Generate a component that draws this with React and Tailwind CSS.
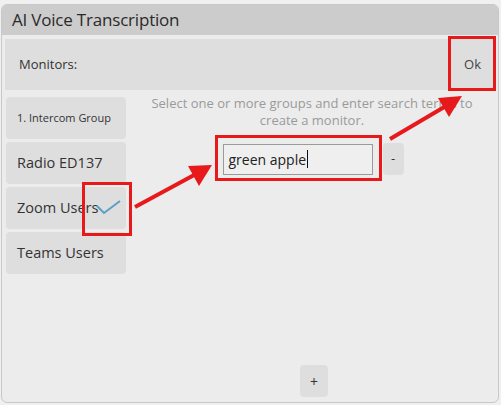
import React from 'react';

const font = { fontFamily: '"Open Sans", "Noto Sans", sans-serif' };

const groups = [
  { name: '1. Intercom Group', small: true },
  { name: 'Radio ED137' },
  { name: 'Zoom Users', checked: true },
  { name: 'Teams Users' },
];

const App = () => {
  return (
    <div className="relative w-[501px] h-[405px] bg-[#f0f0f0] pt-1 pl-px pr-[2px] overflow-hidden" style={font}>
      <div className="h-[399px] bg-[#ececec] border border-[#c8c8c8] rounded-md overflow-hidden flex flex-col">
        {/* Title */}
        <div className="h-[30px] bg-[#cccccc] flex items-center pl-[10px] shrink-0">
          <span className="text-[17px] text-[#2a2a2a] tracking-[-0.2px]">AI Voice Transcription</span>
        </div>

        {/* Monitors row */}
        <div className="mx-[3px] mt-[4px] h-[51px] bg-[#dedede] flex items-center justify-between pl-[14px] pr-[14px] shrink-0">
          <span className="text-[13px] text-[#333]">Monitors:</span>
          <span className="text-[13px] text-[#444]">Ok</span>
        </div>

        {/* Body */}
        <div className="flex flex-1 min-h-0">
          <div className="w-[120px] ml-[4px] mt-[7px] flex flex-col gap-[3px] shrink-0">
            {groups.map((g) => (
              <div key={g.name} className="h-[42px] bg-[#dedede] rounded-[4px] flex items-center pl-[11px] relative">
                <span className={g.small ? 'text-[11px] text-[#333]' : 'text-[14.5px] text-[#333]'}>{g.name}</span>
                {g.checked && (
                  <svg className="absolute left-[90px] top-[13px]" width="26" height="18" viewBox="0 0 26 18">
                    <polyline points="1,6 8,13 24,1" fill="none" stroke="#5b9fc6" strokeWidth="2" />
                  </svg>
                )}
              </div>
            ))}
          </div>

          <div className="flex-1 flex flex-col items-center pt-[5px]">
            <p className="text-[13px] leading-[17px] text-[#9a9a9a] text-center w-[340px]">
              Select one or more groups and enter search terms to create a monitor.
            </p>
            <div className="flex items-center gap-[10px] mt-[14px] ml-[2px]">
              <div className="w-[150px] h-[31px] border border-[#9a9a9a] bg-[#efefef] flex items-center pl-[5px]">
                <span className="text-[14px] text-[#222]">green apple</span>
                <span className="w-px h-[18px] bg-[#111] ml-px"></span>
              </div>
              <div className="w-[21px] h-[32px] bg-[#dedede] rounded-[4px] flex items-center justify-center text-[13px] text-[#333]">-</div>
            </div>
            <div className="flex-1"></div>
            <div className="w-[28px] h-[32px] bg-[#dedede] rounded-[4px] flex items-center justify-center text-[14px] text-[#333] mb-[5px] ml-[4px]">+</div>
          </div>
        </div>
      </div>

      {/* Annotation boxes */}
      <div className="absolute left-[448px] top-[36px] w-[48px] h-[55px] border-[3px] border-[#e8191b]"></div>
      <div className="absolute left-[82px] top-[182px] w-[50px] h-[54px] border-[3px] border-[#e8191b]"></div>
      <div className="absolute left-[215px] top-[135px] w-[167px] h-[46px] border-[3px] border-[#e8191b]"></div>

      {/* Arrows */}
      <svg className="absolute left-0 top-0 pointer-events-none" width="501" height="405" viewBox="0 0 501 405">
        <line x1="135" y1="207" x2="196" y2="174" stroke="#e8191b" strokeWidth="4" />
        <polygon points="212,165 188,166 199,186" fill="#e8191b" />
        <line x1="390" y1="139" x2="446" y2="106" stroke="#e8191b" strokeWidth="4" />
        <polygon points="462,96 438,98 449,117" fill="#e8191b" />
      </svg>
    </div>
  );
};

export default App;
